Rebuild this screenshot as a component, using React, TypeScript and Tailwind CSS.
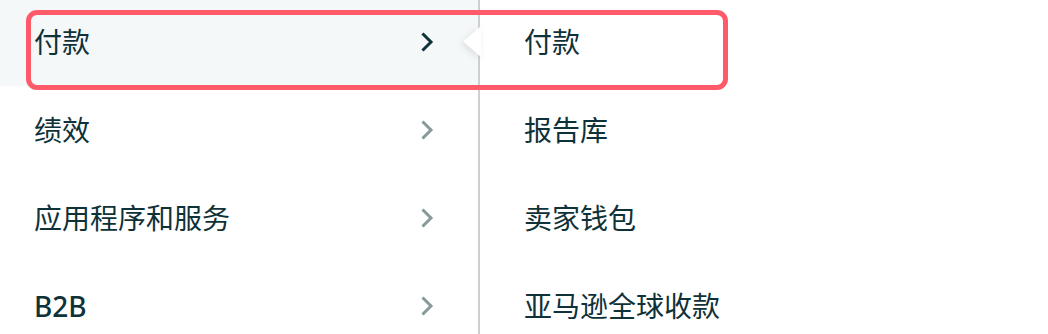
import React from "react";

const left = ["付款", "绩效", "应用程序和服务", "B2B"];
const right = ["付款", "报告库", "卖家钱包", "亚马逊全球收款"];

function Chevron({ active }: { active: boolean }) {
  return (
    <svg width="13" height="20" viewBox="0 0 13 20" fill="none">
      <path
        d="M2.5 2.5 L10 10 L2.5 17.5"
        stroke={active ? "#0f3138" : "#8a9a9a"}
        strokeWidth="3"
        strokeLinecap="square"
        strokeLinejoin="miter"
      />
    </svg>
  );
}

export default function App() {
  return (
    <div
      className="relative w-[1048px] h-[334px] bg-white overflow-hidden flex text-[28px] font-normal text-[#0f3138]"
      style={{ fontFamily: '"Noto Sans", "Noto Sans CJK SC", sans-serif' }}
    >
      <div className="w-[478px] flex flex-col -mt-[2px]">
        {left.map((t, i) => (
          <div
            key={t}
            className={`h-[88px] shrink-0 flex items-center justify-between pl-[34px] pr-[44px] ${
              i === 0 ? "bg-[#f5f8f9]" : ""
            }`}
          >
            <span className={`leading-none ${t === "B2B" ? "font-medium" : ""}`}>{t}</span>
            <Chevron active={i === 0} />
          </div>
        ))}
      </div>
      <div className="w-[2px] bg-[#cfcfcf] shrink-0" />
      <div className="flex-1 flex flex-col -mt-[2px] pl-[44px]">
        {right.map((t) => (
          <div key={t} className="h-[88px] shrink-0 flex items-center">
            <span className="leading-none">{t}</span>
          </div>
        ))}
      </div>
      <div className="absolute left-[463px] top-[26px] drop-shadow-[-2px_2px_3px_rgba(0,0,0,0.10)]">
        <div className="w-[18px] h-[31px] bg-white [clip-path:polygon(100%_0,0_50%,100%_100%)]" />
      </div>
      <div className="absolute left-[26px] top-[10px] w-[702px] h-[80px] border-[5px] border-[#ff5a6a] rounded-[11px] pointer-events-none" />
    </div>
  );
}
